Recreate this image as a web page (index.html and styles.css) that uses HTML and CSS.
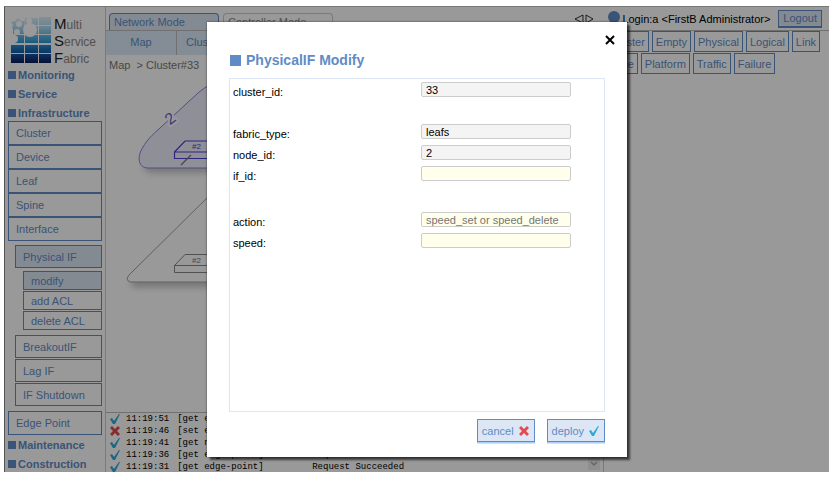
FILE: index.html
```html
<!DOCTYPE html>
<html lang="en">
<head>
<meta charset="utf-8">
<title>Multi Service Fabric</title>
<link rel="stylesheet" href="styles.css">
</head>
<body>
<div class="stage">
  <nav class="sidebar">
    <div class="brand">
      <svg class="brand-mark" viewBox="0 0 41 48" width="41" height="48" aria-hidden="true">
        <defs>
          <linearGradient id="tile" x1="0" y1="0" x2="0" y2="48" gradientUnits="userSpaceOnUse">
            <stop offset="0" stop-color="#e4f2fa"/><stop offset=".25" stop-color="#a8d8f0"/><stop offset=".5" stop-color="#3ca6dc"/><stop offset=".7" stop-color="#1470b8"/><stop offset=".85" stop-color="#14408c"/><stop offset="1" stop-color="#0b1550"/>
          </linearGradient>
        </defs>
        <g fill="url(#tile)">
          <path d="M28 1h12v8H28zM14 2h13v7H14zM2 10h11v8H2zM14 10h13v8H14zM28 10h12v8H28zM3 19h10v8H3zM14 19h13v8H14zM28 19h12v8H28zM0 29h13v8H0zM14 29h13v8H14zM28 29h12v8H28zM0 38h13v9H0zM14 38h13v9H14zM28 38h12v9H28z"/>
          <path d="M0 6l4-1 3-3 3 3h4l-1 5 2 4-5 1-3 4-2-5-4-2 1-3z"/>
        </g>
        <g fill="#fff">
          <circle cx="19" cy="14" r="7"/>
          <circle cx="8" cy="8" r="3"/>
          <circle cx="18" cy="5" r="3"/>
          <circle cx="6" cy="16" r="3"/>
          <circle cx="3" cy="23" r="4"/>
        </g>
      </svg>
      <div class="brand-name"><span><b>M</b>ulti</span><span><b>S</b>ervice</span><span><b>F</b>abric</span></div>
    </div>
    <a class="section" href="#">Monitoring</a>
    <a class="section" href="#">Service</a>
    <a class="section" href="#">Infrastructure</a>
    <div class="menu">
      <a href="#">Cluster</a>
      <a href="#">Device</a>
      <a href="#">Leaf</a>
      <a href="#">Spine</a>
      <a href="#">Interface</a>
    </div>
    <div class="submenu">
      <a class="current" href="#">Physical IF</a>
      <div class="actions">
        <a class="current" href="#">modify</a>
        <a href="#">add ACL</a>
        <a href="#">delete ACL</a>
      </div>
      <a href="#">BreakoutIF</a>
      <a href="#">Lag IF</a>
      <a href="#">IF Shutdown</a>
    </div>
    <div class="menu"><a href="#">Edge Point</a></div>
    <a class="section" href="#">Maintenance</a>
    <a class="section" href="#">Construction</a>
  </nav>

  <header class="topbar">
    <div class="modes">
      <a class="mode on" href="#">Network Mode</a>
      <a class="mode" href="#">Controller Mode</a>
    </div>
    <svg class="arrows" viewBox="0 0 20 10" width="20" height="10" aria-hidden="true"><path d="M9 1L1 5l8 4zM12 1l7 4-7 4z" fill="none" stroke="#000" stroke-width=".8"/></svg>
    <span class="avatar"></span>
    <span class="login">Login:a &lt;FirstB Administrator&gt;</span>
    <button class="logout" type="button">Logout</button>
  </header>

  <main class="main">
    <div class="tabs"><a href="#">Map</a><a href="#">Cluster</a></div>
    <div class="map">
      <div class="crumbs">Map &nbsp;&gt; Cluster#33</div>
      <svg class="fabric" viewBox="106 80 140 220" width="140" height="220" aria-hidden="true">
        <defs><filter id="soft" x="-20%" y="-20%" width="140%" height="140%"><feDropShadow dx="4" dy="5" stdDeviation="3" flood-opacity=".22"/></filter></defs>
        <path filter="url(#soft)" d="M260 168H148C139 168 136 158 143 147C147 140 152 135 160 128L198 93Q210 82 230 78H260z" fill="#efeffd"/>
        <path d="M260 168H148C139 168 136 158 143 147C147 140 152 135 160 128L198 93Q210 82 230 78H260z" fill="none" stroke="#8a82e0"/>
        <path filter="url(#soft)" d="M260 282H130Q125 280 129 275L210 195 224 182H260z" fill="#fff" stroke="#888" stroke-width=".8"/>
        <g fill="none" stroke="#4a40d8" stroke-width="1.2"><path d="M174.500 152.500V158.500H230M174.500 152L185 141H230M174 152H230"/></g>
        <path d="M181 165l10-10" stroke="#777" stroke-width="1.3"/>
        <g fill="none" stroke="#888"><path d="M174.500 266V272.500H230M174.500 265.500L185 254.500H230M174 265.500H230"/></g>
        <text x="192" y="149" class="node blue">#2</text>
        <text x="192" y="263" class="node">#2</text>
        <text x="166" y="124" class="group" transform="rotate(-38 170 119)">2</text>
      </svg>
    </div>
    <div class="log">
      <ul>
        <li><svg class="ico" viewBox="0 0 12 12"><path class="ok" d="M1 6l2-1 2 3 5-7 1 0-5 10h-2z"/></svg><time>11:19:51</time><span class="job">[get edge-point]</span><span>Request Succeeded</span></li>
        <li><svg class="ico" viewBox="0 0 12 12"><path class="ng" d="M1 3l2-2 3 3 3-3 2 2-3 3 3 3-2 2-3-3-3 3-2-2 3-3z"/></svg><time>11:19:46</time><span class="job">[set edge-point]</span><span>Request Failed</span></li>
        <li><svg class="ico" viewBox="0 0 12 12"><path class="ok" d="M1 6l2-1 2 3 5-7 1 0-5 10h-2z"/></svg><time>11:19:41</time><span class="job">[get node]</span><span>Request Succeeded</span></li>
        <li><svg class="ico" viewBox="0 0 12 12"><path class="ok" d="M1 6l2-1 2 3 5-7 1 0-5 10h-2z"/></svg><time>11:19:36</time><span class="job">[get edge-point]</span><span>Request Succeeded</span></li>
        <li><svg class="ico" viewBox="0 0 12 12"><path class="ok" d="M1 6l2-1 2 3 5-7 1 0-5 10h-2z"/></svg><time>11:19:31</time><span class="job">[get edge-point]</span><span>Request Succeeded</span></li>
      </ul>
      <div class="scroll"><svg viewBox="0 0 12 12" width="12" height="12" aria-hidden="true"><path d="M3 4l3 3 3-3" fill="none" stroke="#aaa" stroke-width="1.500"/></svg></div>
    </div>
  </main>

  <aside class="filters">
    <div><button type="button">Cluster</button><button type="button">Empty</button><button type="button">Physical</button><button type="button">Logical</button><button type="button">Link</button></div>
    <div><button type="button">Slice</button><button type="button">Platform</button><button type="button">Traffic</button><button type="button">Failure</button></div>
  </aside>

  <div class="overlay">
    <section class="dialog" role="dialog" aria-labelledby="dialog-title">
      <button class="close" type="button" aria-label="Close"><svg viewBox="0 0 10 10" width="10" height="10" aria-hidden="true"><path d="M1 1l8 8M9 1L1 9" stroke="#000" stroke-width="2"/></svg></button>
      <h1 id="dialog-title">PhysicalIF Modify</h1>
      <form class="form" id="modify-form">
        <div class="row"><label for="cluster">cluster_id:</label><input id="cluster" value="33" readonly></div>
        <div class="row gap"><label for="fabric">fabric_type:</label><input id="fabric" value="leafs" readonly></div>
        <div class="row"><label for="node">node_id:</label><input id="node" value="2" readonly></div>
        <div class="row"><label for="if">if_id:</label><input id="if"></div>
        <div class="row gap-wide"><label for="action">action:</label><input id="action" placeholder="speed_set or speed_delete"></div>
        <div class="row"><label for="speed">speed:</label><input id="speed"></div>
      </form>
      <div class="buttons">
        <button type="button">cancel<svg class="ico" viewBox="0 0 12 12"><path class="ng" d="M1 3l2-2 3 3 3-3 2 2-3 3 3 3-2 2-3-3-3 3-2-2 3-3z"/></svg></button>
        <button type="submit" form="modify-form">deploy<svg class="ico" viewBox="0 0 12 12"><path class="ok" d="M1 6l2-1 2 3 5-7 1 0-5 10h-2z"/></svg></button>
      </div>
    </section>
  </div>
</div>
</body>
</html>
```
FILE: styles.css
```css
* { box-sizing: border-box; }

:root {
  --blue: #5f8cc6;
  --pale: #dce6f4;
}

body {
  margin: 0;
  height: 100vh;
  padding: 6px 8px 5px 4px;
  background: #fff;
  font: 11px/14px "Liberation Sans", Arial, sans-serif;
}

a { color: var(--blue); text-decoration: none; }

button {
  font: inherit;
  color: var(--blue);
  cursor: pointer;
}

.stage {
  position: relative;
  height: 100%;
  overflow: hidden;
  display: grid;
  grid-template-columns: 101px minmax(0, 1fr) 225px;
  grid-template-rows: 24px minmax(0, 1fr);
  border-top: 1px solid #777;
  border-left: 1px solid #555;
  background: #fff;
}

/* Sidebar */
.sidebar {
  grid-row: 1 / 3;
  padding: 4px 3px 0 3px;
  border-right: 1px solid #ccc;
}

.brand {
  display: flex;
  gap: 2px;
  height: 54px;
  padding: 5px 0 0 3px;
}

.brand-name {
  display: flex;
  flex-direction: column;
  font-size: 12px;
  line-height: 15px;
  color: #888;
}

.brand-name b {
  font-size: 15px;
  font-weight: normal;
  color: #222;
}

.brand-name span { height: 17px; }

.section {
  display: flex;
  align-items: center;
  gap: 2px;
  height: 19px;
  font-weight: bold;
}

.section::before {
  content: "";
  width: 8px;
  height: 8px;
  background: var(--blue);
}

.section + .menu { margin-top: -1px; }

.menu a, .submenu a {
  display: flex;
  align-items: center;
  height: 24px;
  padding-left: 7px;
  border: 1px solid var(--blue);
  background: #fff;
}

.submenu {
  display: grid;
  gap: 1px;
  padding: 4px 0 5px 7px;
}

.submenu a { height: 23px; }

.actions {
  display: grid;
  gap: 1px;
  padding: 2px 0 4px 8px;
}

.actions a { height: 19px; }

.submenu .current { background: var(--pale); }

/* Top bar */
.topbar {
  grid-column: 2 / 4;
  display: flex;
  align-items: center;
  padding-right: 7px;
  border-bottom: 1px solid #bbb;
}

.modes {
  display: flex;
  gap: 4px;
  align-self: flex-end;
  margin-right: auto;
  padding-left: 3px;
}

.mode {
  width: 110px;
  height: 17px;
  padding-left: 4px;
  line-height: 16px;
  border: 1px solid #ccc;
  border-bottom: 0;
  border-radius: 4px 4px 0 0;
  color: #888;
}

.mode.on {
  border-color: var(--blue);
  background: var(--pale);
  color: var(--blue);
}

.avatar {
  width: 12px;
  height: 12px;
  margin: 0 2px 4px 14px;
  border-radius: 50%;
  background: var(--blue);
}

.login { margin-right: 8px; }

.logout {
  height: 18px;
  padding: 0 4px;
  border: 1px solid var(--blue);
  border-bottom-width: 2px;
  background: var(--pale);
}

/* Map and log */
.main {
  display: flex;
  flex-direction: column;
  min-height: 0;
  border-right: 1px solid #ccc;
}

.tabs {
  display: flex;
  height: 24px;
  background: #dceaf8;
}

.tabs a {
  width: 71px;
  line-height: 23px;
  text-align: center;
  border-right: 1px solid #bbb;
}

.tabs a + a { width: 54px; }

.map {
  flex: 1;
  min-height: 0;
  overflow: hidden;
  border-bottom: 1px solid #bbb;
}

.crumbs {
  height: 25px;
  padding: 3px 3px 0;
  color: #777;
}

.fabric { display: block; }

.node {
  font: 8px "Liberation Sans", Arial, sans-serif;
  fill: #777;
}

.node.blue { fill: #4a40d8; }

.group {
  font: 16px "Liberation Sans", Arial, sans-serif;
  fill: #6b62d0;
  stroke: #fff;
  stroke-width: 4px;
  paint-order: stroke;
}

.log {
  display: flex;
  height: 59px;
  overflow: hidden;
  font: 9px/12px "Liberation Mono", "Courier New", monospace;
}

.log ul {
  flex: 1;
  margin: 0;
  padding: 0 0 0 3px;
  list-style: none;
}

.log li { display: flex; height: 12px; }

.log time { margin: 0 8px 0 5px; }

.job { width: 135px; }

.scroll {
  align-self: flex-end;
  width: 12px;
  height: 12px;
  margin: 0 3px 2px 0;
  background: #eee;
}

.ico { width: 12px; height: 12px; }
.ok { fill: #30a9d6; }
.ng { fill: #e04a50; }

/* Filters */
.filters {
  padding-left: 2px;
}

.filters div {
  display: flex;
  gap: 3px;
  margin-bottom: 1px;
}

.filters button {
  height: 21px;
  padding: 0 3px;
  border: 1px solid var(--blue);
  background: #fff;
}

/* Dialog */
.overlay {
  position: absolute;
  inset: 0;
  display: flex;
  align-items: center;
  justify-content: center;
  background: rgba(0, 0, 0, .4);
}

.dialog {
  position: relative;
  width: 420px;
  padding: 31px 22px 15px;
  background: #fff;
  box-shadow: 3px 3px 2px rgba(0, 0, 0, .6), 0 0 2px rgba(0, 0, 0, .6);
}

.close {
  position: absolute;
  top: 13px;
  right: 12px;
  display: flex;
  padding: 0;
  border: 0;
  background: none;
}

.dialog h1 {
  display: flex;
  align-items: center;
  gap: 5px;
  margin: 0 0 10px 1px;
  font-size: 14px;
  line-height: 15px;
  color: var(--blue);
}

.dialog h1::before {
  content: "";
  width: 11px;
  height: 11px;
  background: var(--blue);
}

.form {
  min-height: 334px;
  padding: 3px;
  border: 1px solid var(--pale);
}

.row {
  display: flex;
  align-items: flex-start;
  justify-content: space-between;
  height: 21px;
  padding-right: 30px;
}

.gap { margin-top: 21px; }
.gap-wide { margin-top: 25px; }

.row label { padding-top: 3px; }

.row input {
  width: 150px;
  height: 15px;
  padding: 0 4px;
  border: 1px solid #ccc;
  border-radius: 2px;
  background: #ffffec;
  font: inherit;
  color: #000;
}

.row input:read-only { background: #f4f4f4; }
.row input::placeholder { color: #757575; }

.buttons {
  display: flex;
  justify-content: flex-end;
  gap: 12px;
  padding-top: 7px;
}

.buttons button {
  display: flex;
  align-items: center;
  gap: 4px;
  height: 23px;
  padding: 0 4px;
  border: 1px solid var(--blue);
  background: var(--pale);
  box-shadow: 0 1px 0 #a9cdf5, 0 2px 0 #cfe3fa;
}
```
